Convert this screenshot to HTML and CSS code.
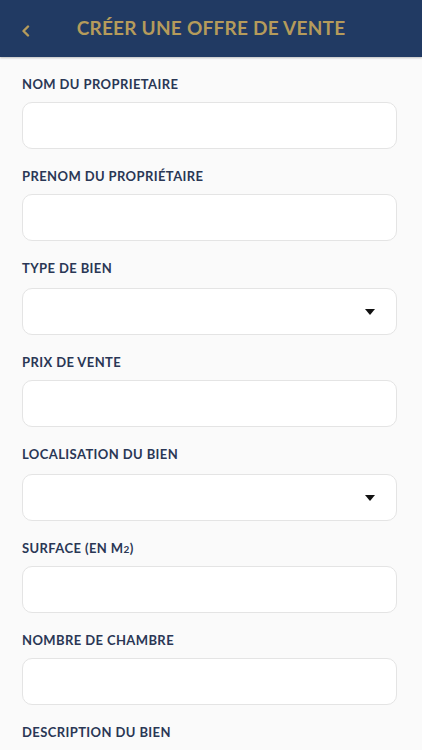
FILE: index.html
```html
<!DOCTYPE html>
<html lang="fr">
<head>
<meta charset="utf-8">
<link rel="stylesheet" href="styles.css">
</head>
<body>
<header class="topbar">
  <button class="back" aria-label="Retour">
    <svg width="10" height="12" viewBox="0 0 10 12"><path d="M7 1.5 L2.5 6 L7 10.5" fill="none" stroke="#b59b5b" stroke-width="2.4" stroke-linecap="round" stroke-linejoin="round"/></svg>
  </button>
  <h1 class="title">CRÉER UNE OFFRE DE VENTE</h1>
</header>
<main class="form">
  <div class="field">
    <label class="label">NOM DU PROPRIETAIRE</label>
    <div class="input"></div>
  </div>
  <div class="field">
    <label class="label">PRENOM DU PROPRIÉTAIRE</label>
    <div class="input"></div>
  </div>
  <div class="field select-field">
    <label class="label">TYPE DE BIEN</label>
    <div class="input select"><span class="caret"></span></div>
  </div>
  <div class="field">
    <label class="label">PRIX DE VENTE</label>
    <div class="input"></div>
  </div>
  <div class="field select-field">
    <label class="label">LOCALISATION DU BIEN</label>
    <div class="input select"><span class="caret"></span></div>
  </div>
  <div class="field">
    <label class="label">SURFACE (EN M<span class="sub">2</span>)</label>
    <div class="input"></div>
  </div>
  <div class="field">
    <label class="label">NOMBRE DE CHAMBRE</label>
    <div class="input"></div>
  </div>
  <div class="field">
    <label class="label">DESCRIPTION DU BIEN</label>
    <div class="input tall"></div>
  </div>
</main>
</body>
</html>
```
FILE: styles.css
```css
* { box-sizing: border-box; }
html, body { margin: 0; padding: 0; }
body {
  background: #fafafa;
  font-family: Lato, "Open Sans", sans-serif;
  width: 422px;
  height: 750px;
  overflow: hidden;
}
.topbar {
  position: relative;
  height: 57px;
  background: #213a63;
  display: flex;
  align-items: center;
  justify-content: center;
  box-shadow: 0 1px 2px rgba(0,0,0,0.25);
}
.back {
  position: absolute;
  left: 19px;
  top: 24px;
  width: 14px;
  height: 14px;
  padding: 0;
  border: 0;
  background: none;
  display: flex;
  align-items: center;
  justify-content: center;
}
.title {
  margin: 0 0 2px 0;
  color: #b59b5b;
  font-size: 19px;
  font-weight: 700;
  letter-spacing: 0.25px;
}
.form {
  padding: 19px 25px 0 22px;
  display: flex;
  flex-direction: column;
}
.field {
  display: flex;
  flex-direction: column;
  gap: 10px;
  margin-bottom: 19px;
}
.select-field { gap: 12px; }
.label {
  height: 16px;
  line-height: 16px;
  font-size: 13px;
  font-weight: 700;
  color: #2a3755;
  letter-spacing: 0.4px;
}
.sub { font-size: 10px; }
.input {
  height: 47px;
  background: #fff;
  border: 1px solid #e4e4e4;
  border-radius: 10px;
}
.select {
  display: flex;
  align-items: center;
  justify-content: flex-end;
  padding-right: 21px;
}
.caret {
  width: 0;
  height: 0;
  border-left: 5.5px solid transparent;
  border-right: 5.5px solid transparent;
  border-top: 6px solid #111;
}
.tall { height: 90px; }
```
